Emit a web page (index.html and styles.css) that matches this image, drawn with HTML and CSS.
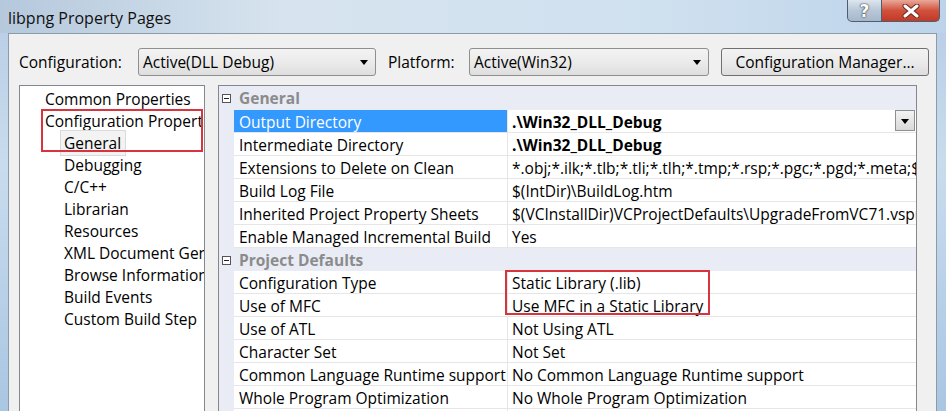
FILE: index.html
```html
<!DOCTYPE html>
<html lang="en">
<head>
  <meta charset="UTF-8">
  <title>libpng Property Pages</title>
  <link rel="stylesheet" href="styles.css">
</head>
<body>

  <div class="window">

    <div class="titlebar">
      <span class="title">libpng Property Pages</span>
      <div class="caption-buttons">
        <span class="cap help">?</span>
        <span class="cap close">
          <svg width="20" height="14" viewBox="0 0 20 14">
            <path d="M4 2 L16 12 M16 2 L4 12" stroke="#6b2a22" stroke-width="5" stroke-linecap="round"/>
            <path d="M4 2 L16 12 M16 2 L4 12" stroke="#fff" stroke-width="3" stroke-linecap="round"/>
          </svg>
        </span>
      </div>
    </div>

    <div class="client">

      <div class="toolbar">
        <span class="label">Configuration:</span>
        <div class="combo combo-config">Active(DLL Debug)<span class="arrow"></span></div>
        <span class="label platform">Platform:</span>
        <div class="combo combo-platform">Active(Win32)<span class="arrow"></span></div>
        <button class="manager">Configuration Manager...</button>
      </div>

      <div class="main">

        <div class="tree">
          <div class="node">Common Properties</div>
          <div class="node">Configuration Properties</div>
          <div class="node child"><span class="selected">General</span></div>
          <div class="node child">Debugging</div>
          <div class="node child">C/C++</div>
          <div class="node child">Librarian</div>
          <div class="node child">Resources</div>
          <div class="node child">XML Document Generator</div>
          <div class="node child">Browse Information</div>
          <div class="node child">Build Events</div>
          <div class="node child">Custom Build Step</div>
          <div class="mark mark-tree"></div>
        </div>

        <div class="grid">
          <div class="row head first"><span class="gut"><span class="minus"></span></span><span class="cat">General</span></div>
          <div class="row active">
            <span class="gut"></span>
            <span class="name">Output Directory</span>
            <span class="value bold">.\Win32_DLL_Debug<span class="drop"><span class="arrow"></span></span></span>
          </div>
          <div class="row"><span class="gut"></span><span class="name">Intermediate Directory</span><span class="value bold">.\Win32_DLL_Debug</span></div>
          <div class="row"><span class="gut"></span><span class="name">Extensions to Delete on Clean</span><span class="value">*.obj;*.ilk;*.tlb;*.tli;*.tlh;*.tmp;*.rsp;*.pgc;*.pgd;*.meta;$(TargetPath)</span></div>
          <div class="row"><span class="gut"></span><span class="name">Build Log File</span><span class="value">$(IntDir)\BuildLog.htm</span></div>
          <div class="row"><span class="gut"></span><span class="name">Inherited Project Property Sheets</span><span class="value">$(VCInstallDir)VCProjectDefaults\UpgradeFromVC71.vsprops</span></div>
          <div class="row"><span class="gut"></span><span class="name">Enable Managed Incremental Build</span><span class="value">Yes</span></div>
          <div class="row head"><span class="gut"><span class="minus"></span></span><span class="cat">Project Defaults</span></div>
          <div class="row"><span class="gut"></span><span class="name">Configuration Type</span><span class="value">Static Library (.lib)</span></div>
          <div class="row"><span class="gut"></span><span class="name">Use of MFC</span><span class="value">Use MFC in a Static Library</span></div>
          <div class="row"><span class="gut"></span><span class="name">Use of ATL</span><span class="value">Not Using ATL</span></div>
          <div class="row"><span class="gut"></span><span class="name">Character Set</span><span class="value">Not Set</span></div>
          <div class="row"><span class="gut"></span><span class="name">Common Language Runtime support</span><span class="value">No Common Language Runtime support</span></div>
          <div class="row"><span class="gut"></span><span class="name">Whole Program Optimization</span><span class="value">No Whole Program Optimization</span></div>
          <div class="row"><span class="gut"></span><span class="name">&nbsp;</span><span class="value">&nbsp;</span></div>
          <div class="mark mark-grid"></div>
        </div>

      </div>

    </div>

  </div>

</body>
</html>
```

FILE: styles.css
```css
body {
  margin: 0;
  width: 946px;
  height: 411px;
  overflow: hidden;
  font-family: "Open Sans", "Noto Sans", sans-serif;
  font-size: 15.5px;
  color: #000;
  background: linear-gradient(to bottom, #b7cde4, #c9dcee 40%, #a9c6e2);
}

.window {
  display: flex;
  flex-direction: column;
  height: 440px;
}

.titlebar {
  display: flex;
  align-items: flex-start;
  height: 33px;
  padding-left: 8px;
  padding-right: 6px;
  background: linear-gradient(to right, #b5c8dc, #d7e4ef 30%, #cfe0ef 70%, #bcd3ea);
}

.title {
  font-size: 16px;
  line-height: 16px;
  margin-top: 10px;
  color: #111;
}

.caption-buttons {
  display: flex;
  margin-left: auto;
}

.cap {
  display: flex;
  align-items: center;
  justify-content: center;
  height: 21px;
  border: 1px solid #4f5d6f;
  border-top: none;
}

.help {
  width: 33px;
  border-bottom-left-radius: 5px;
  background: linear-gradient(to bottom, #dde6ef, #b8c7d8 50%, #a6b8cb);
  color: #fff;
  font-family: "DejaVu Sans", sans-serif;
  font-weight: bold;
  font-size: 17px;
  text-shadow: 0 0 2px #333, 0 0 1px #333;
}

.close {
  width: 57px;
  border-left: none;
  border-bottom-right-radius: 5px;
  background: linear-gradient(to bottom, #e9a99a, #d2513c 50%, #c13a27);
}

.client {
  flex: 1;
  display: flex;
  flex-direction: column;
  margin-left: 8px;
  margin-right: 9px;
  background-color: #f0f0f0;
  border: 1px solid #8d9aa8;
  border-bottom: none;
}

.toolbar {
  display: flex;
  align-items: center;
  height: 28px;
  padding: 14px 7px 0 10px;
}

.label {
  width: 119px;
  padding-bottom: 1px;
}

.label.platform {
  width: 81px;
  margin-left: 12px;
}

.combo {
  position: relative;
  box-sizing: border-box;
  height: 28px;
  padding-left: 4px;
  line-height: 26px;
  border: 1px solid #8e8f8f;
  border-radius: 3px;
  background: linear-gradient(to bottom, #f3f3f3, #ebebeb 50%, #dedede);
}

.combo-config {
  width: 238px;
}

.combo-platform {
  width: 240px;
}

.arrow {
  position: absolute;
  right: 7px;
  top: 11px;
  width: 0;
  height: 0;
  border-left: 4px solid transparent;
  border-right: 4px solid transparent;
  border-top: 5px solid #000;
}

.manager {
  box-sizing: border-box;
  width: 208px;
  height: 28px;
  margin-left: 12px;
  padding: 0;
  font-family: inherit;
  font-size: 15.5px;
  color: #000;
  border: 1px solid #707070;
  border-radius: 3px;
  background: linear-gradient(to bottom, #f2f2f2, #ebebeb 50%, #dddddd);
}

.main {
  flex: 1;
  display: flex;
  gap: 13px;
  padding: 9px 19px 0 10px;
}

.tree {
  position: relative;
  width: 184px;
  overflow: hidden;
  padding-top: 2px;
  background-color: #fff;
  border: 1px solid #828790;
  border-bottom: none;
}

.node {
  height: 22px;
  line-height: 22px;
  padding-left: 25px;
  white-space: nowrap;
}

.node.child {
  padding-left: 44px;
}

.selected {
  margin-left: -4px;
  padding: 1px 4px 1px 3px;
  background-color: #f3f3f3;
  border: 1px solid #dadada;
}

.grid {
  position: relative;
  flex: 1;
  overflow: hidden;
  background-color: #fff;
  border: 1px solid #828790;
  border-bottom: none;
}

.row {
  display: flex;
  height: 23px;
  white-space: nowrap;
}

.row > span {
  box-sizing: border-box;
  height: 23px;
  padding-top: 1px;
  line-height: 22px;
}

.row.first,
.row.first > span {
  height: 24px;
}

.gut {
  display: flex;
  align-items: center;
  justify-content: center;
  flex: none;
  width: 15px;
  background-color: #e9ecf5;
}

.minus {
  position: relative;
  box-sizing: border-box;
  width: 9px;
  height: 9px;
  border: 1px solid #555;
  background-color: #fff;
}

.minus::after {
  content: "";
  position: absolute;
  left: 1px;
  top: 3px;
  width: 5px;
  height: 1px;
  background-color: #222;
}

.name {
  flex: none;
  width: 274px;
  padding-left: 5px;
  overflow: hidden;
  border-bottom: 1px solid #e6e6e6;
  border-right: 1px solid #e6e6e6;
}

.value {
  position: relative;
  flex: 1;
  padding-left: 4px;
  overflow: hidden;
  border-bottom: 1px solid #e6e6e6;
}

.bold {
  font-weight: bold;
}

.head {
  background-color: #e9ecf5;
}

.cat {
  padding-left: 5px;
  font-weight: bold;
  color: #8b8b8b;
}

.active .name {
  background-color: #3399ff;
  color: #fff;
}

.drop {
  position: absolute;
  right: 1px;
  top: 0;
  width: 18px;
  height: 19px;
  border: 1px solid #8e8f8f;
  background: linear-gradient(to bottom, #f3f3f3, #d9d9d9);
}

.drop .arrow {
  right: 5px;
  top: 8px;
}

.mark {
  position: absolute;
  border: 2px solid #d8343d;
}

.mark-tree {
  left: 21px;
  top: 23px;
  width: 158px;
  height: 39px;
}

.mark-grid {
  left: 286px;
  top: 184px;
  width: 201px;
  height: 41px;
}
```
